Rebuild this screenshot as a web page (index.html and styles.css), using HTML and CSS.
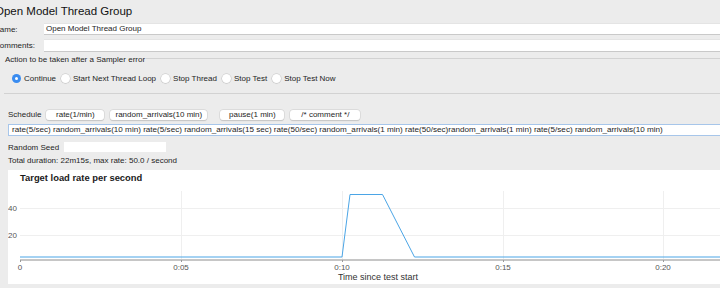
FILE: index.html
```html
<!DOCTYPE html>
<html>
<head>
<meta charset="utf-8">
<link rel="stylesheet" href="styles.css">
</head>
<body>
<div class="page">
  <div class="title">Open Model Thread Group</div>
  <div class="row name-row">
    <span class="lbl">Name:</span>
    <div class="field">Open Model Thread Group</div>
  </div>
  <div class="row comments-row">
    <span class="lbl">Comments:</span>
    <div class="field tall"></div>
  </div>
  <div class="action">
    <div class="action-head"><span class="action-title">Action to be taken after a Sampler error</span><span class="action-line"></span></div>
    <div class="radios">
      <span class="radio on"></span><span class="rlabel">Continue</span>
      <span class="radio"></span><span class="rlabel">Start Next Thread Loop</span>
      <span class="radio"></span><span class="rlabel">Stop Thread</span>
      <span class="radio"></span><span class="rlabel">Stop Test</span>
      <span class="radio"></span><span class="rlabel">Stop Test Now</span>
    </div>
  </div>
  <div class="schedule-row">
    <span class="slabel">Schedule</span>
    <span class="btn b1">rate(1/min)</span>
    <span class="btn b2">random_arrivals(10 min)</span>
    <span class="btn b3">pause(1 min)</span>
    <span class="btn b4">/* comment */</span>
  </div>
  <div class="schedule-input">rate(5/sec) random_arrivals(10 min) rate(5/sec) random_arrivals(15 sec) rate(50/sec) random_arrivals(1 min) rate(50/sec)random_arrivals(1 min) rate(5/sec) random_arrivals(10 min)</div>
  <div class="seed-row">
    <span class="slabel">Random Seed</span>
    <div class="seed-field"></div>
  </div>
  <div class="total">Total duration: 22m15s, max rate: 50.0 / second</div>
  <div class="chart">
    <svg width="712" height="114" viewBox="8 169 712 114">
      <text x="20" y="179.5" class="ctitle">Target load rate per second</text>
      <g class="grid">
        <line x1="20" y1="207.5" x2="720" y2="207.5"/>
        <line x1="20" y1="234.5" x2="720" y2="234.5"/>
        <line x1="181.5" y1="190" x2="181.5" y2="258"/>
        <line x1="342.5" y1="190" x2="342.5" y2="258"/>
        <line x1="503.5" y1="190" x2="503.5" y2="258"/>
        <line x1="663.5" y1="190" x2="663.5" y2="258"/>
      </g>
      <line x1="20" y1="259" x2="720" y2="259" class="axis"/>
      <g class="ticks">
        <line x1="20.5" y1="259" x2="20.5" y2="261"/>
        <line x1="181.5" y1="259" x2="181.5" y2="261"/>
        <line x1="342.5" y1="259" x2="342.5" y2="261"/>
        <line x1="503.5" y1="259" x2="503.5" y2="261"/>
        <line x1="663.5" y1="259" x2="663.5" y2="261"/>
      </g>
      <polyline class="data" points="20,256 342,256 350,193.5 382.5,193.5 414.5,256 720,256"/>
      <g class="ylab">
        <text x="17" y="209.5">40</text>
        <text x="17" y="236.5">20</text>
      </g>
      <g class="xlab">
        <text x="20" y="269">0</text>
        <text x="181" y="269">0:05</text>
        <text x="342" y="269">0:10</text>
        <text x="503" y="269">0:15</text>
        <text x="663" y="269">0:20</text>
      </g>
      <text x="378" y="279" class="xtitle">Time since test start</text>
    </svg>
  </div>
</div>
</body>
</html>
```
FILE: styles.css
```css
html, body {
  margin: 0;
  padding: 0;
}
body {
  width: 720px;
  height: 288px;
  overflow: hidden;
  background: #ececec;
  font-family: "Liberation Sans", Arial, sans-serif;
  font-size: 8px;
  color: #1e1e1e;
}
.page {
  display: flex;
  flex-direction: column;
}
.title {
  height: 23px;
  line-height: 23px;
  font-size: 11.5px;
  margin-left: -5px;
  color: #111;
}
.row {
  display: flex;
  align-items: center;
  margin-left: -6px;
  margin-right: -10px;
}
.lbl {
  width: 50px;
  flex: none;
}
.field {
  flex: 1;
  height: 10px;
  line-height: 10px;
  background: #fff;
  border-top: 1px solid #e4e4e4;
  border-bottom: 1px solid #c9c9c9;
  padding-left: 2px;
}
.field.tall {
  height: 11px;
}
.comments-row {
  margin-top: 4px;
}
.action {
  margin-left: 4px;
  margin-right: -10px;
  border-bottom: 1px solid #d2d2d2;
  margin-top: 2px;
}
.action-head {
  display: flex;
  align-items: flex-start;
  height: 10px;
}
.action-title {
  line-height: 12px;
  padding-left: 1px;
  padding-right: 1px;
}
.action-line {
  flex: 1;
  margin-top: 4px;
  border-top: 1px solid #d2d2d2;
}
.radios {
  display: flex;
  align-items: center;
  height: 29px;
  padding-left: 8px;
}
.radio {
  width: 9px;
  height: 9px;
  border-radius: 50%;
  background: #fff;
  box-shadow: 0 0 0 0.5px #c4c4c4, 0 0.5px 1px rgba(0,0,0,0.15);
  margin-right: 3px;
  flex: none;
  display: flex;
  align-items: center;
  justify-content: center;
}
.radio.on {
  background: #3a8cf0;
  box-shadow: none;
}
.radio.on::after {
  content: "";
  width: 3px;
  height: 3px;
  border-radius: 50%;
  background: #fff;
}
.rlabel {
  margin-right: 5px;
}
.schedule-row {
  display: flex;
  align-items: center;
  margin-top: 15px;
  padding-left: 8px;
  height: 11px;
}
.slabel {
  margin-right: 5px;
}
.btn {
  height: 10px;
  line-height: 10px;
  background: #fff;
  border-radius: 3px;
  box-shadow: 0 0 0 0.5px #cfcfcf, 0 0.5px 1px rgba(0,0,0,0.2);
  text-align: center;
  flex: none;
}
.b1 { width: 58px; }
.b2 { width: 97px; margin-left: 6px; }
.b3 { width: 64px; margin-left: 13px; }
.b4 { width: 70px; margin-left: 6px; }
.schedule-input {
  margin-top: 4px;
  margin-left: 8px;
  margin-right: -10px;
  height: 10px;
  line-height: 10px;
  font-size: 8.12px;
  background: #fff;
  border: 1px solid #a7c6ea;
  padding-left: 3px;
  white-space: nowrap;
  overflow: hidden;
}
.seed-row {
  display: flex;
  align-items: center;
  margin-top: 6px;
  padding-left: 8px;
  height: 10px;
}
.seed-field {
  width: 102px;
  height: 10px;
  background: #fff;
}
.total {
  margin-top: 4px;
  padding-left: 8px;
  height: 10px;
  line-height: 10px;
}
.chart {
  margin-top: 4px;
  margin-left: 8px;
  height: 114px;
  background: #fff;
}
.chart svg {
  display: block;
}
.ctitle {
  font-family: "Liberation Sans", Arial, sans-serif;
  font-weight: bold;
  font-size: 9.4px;
  fill: #1a1a1a;
}
.grid line {
  stroke: #efefef;
  stroke-width: 1;
}
.axis {
  stroke: #c6c6c6;
  stroke-width: 2;
}
.ticks line {
  stroke: #9a9a9a;
  stroke-width: 1;
}
.data {
  fill: none;
  stroke: #4ba5e6;
  stroke-width: 1;
}
.ylab text {
  font-family: "Liberation Sans", Arial, sans-serif;
  font-size: 8px;
  fill: #555;
  text-anchor: end;
}
.xlab text {
  font-family: "Liberation Sans", Arial, sans-serif;
  font-size: 8px;
  fill: #555;
  text-anchor: middle;
}
.xtitle {
  font-family: "Liberation Sans", Arial, sans-serif;
  font-size: 9px;
  fill: #333;
  text-anchor: middle;
}
```
